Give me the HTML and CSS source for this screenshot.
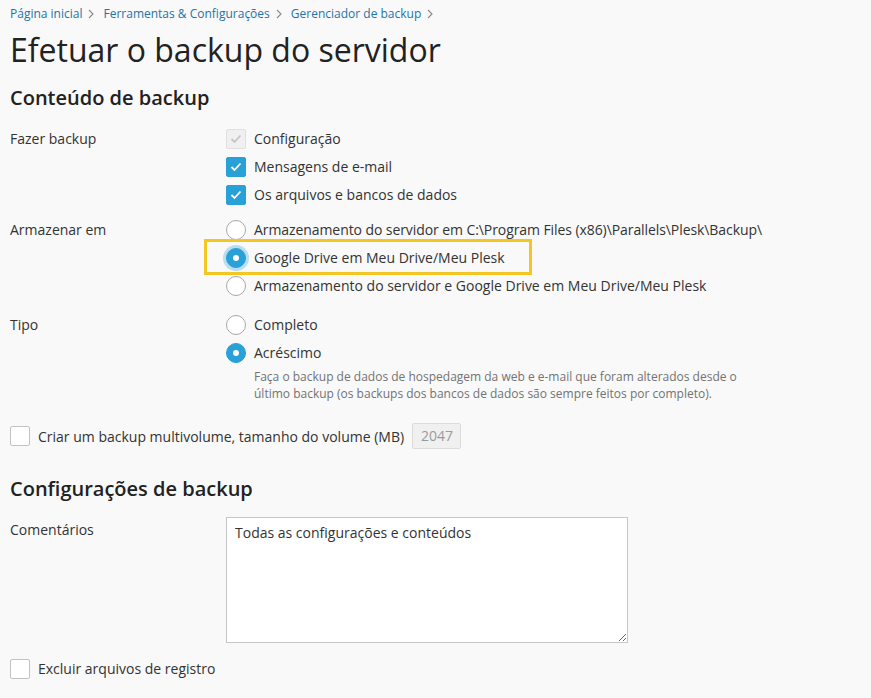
FILE: index.html
```html
<!DOCTYPE html>
<html lang="pt-BR">
<head>
<meta charset="utf-8">
<title>Efetuar o backup do servidor</title>
<link rel="stylesheet" href="styles.css">
</head>
<body>
<div class="page">
  <nav class="crumbs">
    <a href="#">Página inicial</a>
    <svg class="chev" width="6" height="10" viewBox="0 0 6 10"><path d="M1 1l4 4-4 4" fill="none" stroke="#8a8a8a" stroke-width="1.1"/></svg>
    <a href="#">Ferramentas &amp; Configurações</a>
    <svg class="chev" width="6" height="10" viewBox="0 0 6 10"><path d="M1 1l4 4-4 4" fill="none" stroke="#8a8a8a" stroke-width="1.1"/></svg>
    <a href="#">Gerenciador de backup</a>
    <svg class="chev" width="6" height="10" viewBox="0 0 6 10"><path d="M1 1l4 4-4 4" fill="none" stroke="#8a8a8a" stroke-width="1.1"/></svg>
  </nav>

  <h1 class="title">Efetuar o backup do servidor</h1>

  <h2 class="section">Conteúdo de backup</h2>

  <div class="row row-backup">
    <div class="label">Fazer backup</div>
    <div class="field">
      <div class="opt"><span class="cb cb-disabled"><svg width="12" height="10" viewBox="0 0 12 10"><path d="M1.5 5l3 3 6-6.5" fill="none" stroke="#c4c4c4" stroke-width="1.8"/></svg></span><span>Configuração</span></div>
      <div class="opt"><span class="cb cb-on"><svg width="12" height="10" viewBox="0 0 12 10"><path d="M1.5 5l3 3 6-6.5" fill="none" stroke="#fff" stroke-width="1.8"/></svg></span><span>Mensagens de e-mail</span></div>
      <div class="opt"><span class="cb cb-on"><svg width="12" height="10" viewBox="0 0 12 10"><path d="M1.5 5l3 3 6-6.5" fill="none" stroke="#fff" stroke-width="1.8"/></svg></span><span>Os arquivos e bancos de dados</span></div>
    </div>
  </div>

  <div class="row row-store">
    <div class="label">Armazenar em</div>
    <div class="field">
      <div class="opt"><span class="rb"></span><span class="path">Armazenamento do servidor em C:\Program Files (x86)\Parallels\Plesk\Backup\</span></div>
      <div class="opt opt-marked"><span class="rb rb-on rb-focus"></span><span>Google Drive em Meu Drive/Meu Plesk</span></div>
      <div class="opt"><span class="rb"></span><span>Armazenamento do servidor e Google Drive em Meu Drive/Meu Plesk</span></div>
    </div>
  </div>

  <div class="row row-type">
    <div class="label">Tipo</div>
    <div class="field">
      <div class="opt"><span class="rb"></span><span>Completo</span></div>
      <div class="opt"><span class="rb rb-on"></span><span>Acréscimo</span></div>
      <p class="hint">Faça o backup de dados de hospedagem da web e e-mail que foram alterados desde o último backup (os backups dos bancos de dados são sempre feitos por completo).</p>
    </div>
  </div>

  <div class="multi">
    <span class="cb"></span>
    <span class="multi-text">Criar um backup multivolume, tamanho do volume (MB)</span>
    <span class="vol">2047</span>
  </div>

  <h2 class="section section-2">Configurações de backup</h2>

  <div class="row row-comment">
    <div class="label label-ta">Comentários</div>
    <div class="field">
      <textarea class="ta">Todas as configurações e conteúdos</textarea>
    </div>
  </div>

  <div class="opt opt-logs"><span class="cb"></span><span>Excluir arquivos de registro</span></div>
</div>
</body>
</html>
```

FILE: styles.css
```css
html, body {
  margin: 0;
  padding: 0;
  background: #f9f9f9;
}
body {
  font-family: "Open Sans", "Noto Sans", "Liberation Sans", sans-serif;
  font-size: 14px;
  color: #333;
}
.page {
  padding: 6px 10px 0 10px;
}
.crumbs {
  display: flex;
  align-items: center;
  gap: 6px;
  height: 16px;
  font-size: 12px;
  line-height: 16px;
}
.crumbs a {
  color: #1e74a6;
  text-decoration: none;
}
.chev {
  display: block;
  margin: 0 3px 0 0;
}
.title {
  margin: 6px 0 0 0;
  font-size: 32px;
  line-height: 44px;
  font-weight: 400;
  color: #222;
}
.section {
  margin: 12px 0 0 0;
  font-size: 20px;
  line-height: 28px;
  font-weight: 600;
  color: #222;
}
.row {
  display: flex;
}
.label {
  width: 216px;
  flex: none;
  line-height: 20px;
}
.field {
  display: flex;
  flex-direction: column;
  gap: 8px;
}
.opt {
  display: flex;
  align-items: center;
  gap: 8px;
  height: 20px;
  line-height: 20px;
  white-space: nowrap;
  position: relative;
}
.path {
  letter-spacing: -0.08px;
}
.row-backup { margin-top: 17px; }
.row-store { margin-top: 15px; }
.row-type { margin-top: 19px; }

.cb {
  width: 20px;
  height: 20px;
  box-sizing: border-box;
  border: 1px solid #c2c2c2;
  border-radius: 2px;
  background: #fff;
  display: flex;
  align-items: center;
  justify-content: center;
  flex: none;
}
.cb-on {
  background: #28a0d8;
  border-color: #28a0d8;
}
.cb-disabled {
  background: #f0f0f0;
  border-color: #e0e0e0;
}
.rb {
  width: 20px;
  height: 20px;
  box-sizing: border-box;
  border: 1px solid #a8a8a8;
  border-radius: 50%;
  background: #fff;
  flex: none;
  position: relative;
}
.rb-on {
  background: #28a0d8;
  border-color: #28a0d8;
}
.rb-on::before {
  content: "";
  position: absolute;
  left: 6px;
  top: 6px;
  width: 6px;
  height: 6px;
  border-radius: 50%;
  background: #fff;
}
.rb-focus {
  box-shadow: 0 0 0 3px rgba(40, 160, 216, 0.3);
}
.opt-marked::after {
  content: "";
  position: absolute;
  left: -22px;
  top: -9px;
  width: 328px;
  height: 36px;
  box-sizing: border-box;
  border: 3px solid #f3c623;
  pointer-events: none;
}
.hint {
  margin: -3px 0 0 28px;
  width: 500px;
  font-size: 12px;
  line-height: 17px;
  color: #737373;
}
.multi {
  display: flex;
  align-items: center;
  margin-top: 21px;
  height: 26px;
}
.multi-text {
  margin-left: 8px;
  white-space: nowrap;
}
.vol {
  margin-left: 8px;
  width: 49px;
  height: 26px;
  box-sizing: border-box;
  border: 1px solid #dcdcdc;
  border-radius: 2px;
  background: #f0f0f0;
  color: #9a9a9a;
  padding-left: 8px;
  line-height: 24px;
}
.section-2 {
  margin-top: 26px;
}
.row-comment {
  margin-top: 14px;
}
.label-ta {
  padding-top: 3px;
}
.ta {
  width: 402px;
  height: 126px;
  box-sizing: border-box;
  border: 1px solid #c6c6c6;
  background: #fff;
  font-family: "Open Sans", "Noto Sans", "Liberation Sans", sans-serif;
  font-size: 14px;
  line-height: 20px;
  color: #333;
  padding: 5px 8px;
  margin: 0;
  display: block;
}
.opt-logs {
  margin-top: 16px;
}
```
